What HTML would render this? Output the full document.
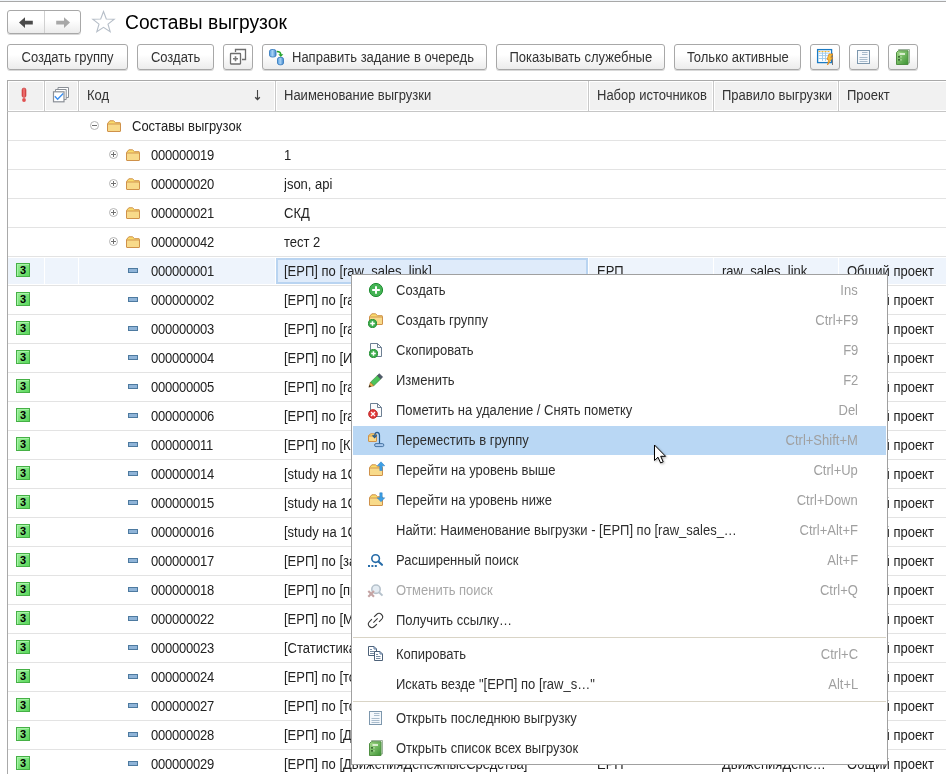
<!DOCTYPE html>
<html><head><meta charset="utf-8">
<style>
*{margin:0;padding:0;box-sizing:border-box}
html,body{width:946px;height:774px;overflow:hidden;background:#fff}
body{position:relative;font-family:"Liberation Sans",sans-serif;font-size:13px;color:#333}
.abs{position:absolute}
.s{display:inline-block;font-size:14px;transform:scaleX(.9286);transform-origin:0 50%}
.sr{transform-origin:100% 50%}
.sc{transform-origin:50% 50%}
svg{display:block}
.topline{left:0;top:0;width:946px;height:1px;background:#f1f5f9}
.topline2{left:0;top:1px;width:946px;height:1px;background:#a8a8a8}
.btn{position:absolute;top:44px;height:26px;border:1px solid #a8a8a8;border-radius:3px;
 background:linear-gradient(#ffffff 40%,#ececec);box-shadow:0 1px 0 rgba(0,0,0,.15);
 line-height:25px;text-align:center;color:#333;white-space:nowrap}
.nav{position:absolute;left:7px;top:10px;width:74px;height:24px;border:1px solid #a8a8a8;border-radius:3px;
 background:linear-gradient(#ffffff 40%,#ececec);box-shadow:0 1px 0 rgba(0,0,0,.15)}
.title{left:125px;top:10px;font-size:19px;color:#000;line-height:25px;white-space:nowrap}
.hdr{left:7px;top:80px;width:939px;height:32px;border-top:1px solid #a9a9a9;border-left:1px solid #a9a9a9;border-bottom:1px solid #c6c6c6;background:#c9c9c9}
.hc{position:absolute;top:0;height:30px;background:#f1f1f1;border:1px solid #fff;color:#333;line-height:27px;padding-left:7px;white-space:nowrap}
.tbl{left:7px;top:112px;width:939px;height:662px;border-left:1px solid #a9a9a9}
.row{position:absolute;left:0;width:939px;height:29px;border-bottom:1px solid #e3e3e3}
.cell{position:absolute;top:0;height:28px;line-height:29px;white-space:nowrap;overflow:hidden;color:#222}
.menu{left:351px;top:274px;width:537px;height:491px;border:1px solid #a0a0a0;background:#fff}
.mi{position:absolute;left:1px;width:533px;height:30px;line-height:29px;white-space:nowrap;color:#2e2e2e}
.mi .t{position:absolute;left:43px;top:0}
.mi .k{position:absolute;right:28px;top:0;color:#a0a0a0}
.sep{position:absolute;left:1px;width:533px;height:1px;background:#d9d4c6}
.badge{position:absolute;left:8px;top:6px;width:14px;height:14px;border:1px solid #46b046;background:linear-gradient(135deg,#9af09a,#5cd65c);box-shadow:inset 1px 1px 0 #a8f3a8;
 font:bold 11px/13px "Liberation Sans",sans-serif;color:#000;text-align:center}
.dash{position:absolute;left:120px;top:11px;width:10px;height:5px;border:1px solid #4d7aa0;background:#8fb4d8}
</style></head><body>
<div class="abs topline"></div><div class="abs topline2"></div>

<div class="nav"></div>
<div class="abs" style="left:44px;top:11px;width:1px;height:22px;background:#d0d0d0"></div>
<svg class="abs" style="left:18px;top:17px" width="16" height="12" viewBox="0 0 16 12"><path d="M1 5.5 L7 0.3 V3.8 H14.8 V7.4 H7 V11 Z" fill="#4a4a4a"/></svg>
<svg class="abs" style="left:55px;top:17px" width="16" height="12" viewBox="0 0 16 12"><path d="M15 5.5 L9 0.3 V3.8 H1.2 V7.4 H9 V11 Z" fill="#a8a8a8"/></svg>
<svg class="abs" style="left:91px;top:10px" width="25" height="24" viewBox="0 0 25 24"><path d="M12.5 1.5 L15.3 9 L23.2 9.2 L17 14.1 L19.2 21.8 L12.5 17.3 L5.8 21.8 L8 14.1 L1.8 9.2 L9.7 9 Z" fill="#fff" stroke="#b6bec8" stroke-width="1.1"/></svg>
<div class="abs title"><span style="display:inline-block;font-size:20px;transform:scaleX(.962);transform-origin:0 50%">Составы выгрузок</span></div>
<div class="btn" style="left:7px;width:121px"><span class="s sc">Создать группу</span></div>
<div class="btn" style="left:137px;width:77px"><span class="s sc">Создать</span></div>
<div class="btn" style="left:223px;width:30px"><span class="s sc"></span></div>
<div class="btn" style="left:262px;width:225px;text-align:left;padding-left:29px"><span class="s">Направить задание в очередь</span></div>
<div class="btn" style="left:496px;width:169px"><span class="s sc">Показывать служебные</span></div>
<div class="btn" style="left:674px;width:127px"><span class="s sc">Только активные</span></div>
<div class="btn" style="left:810px;width:30px"><span class="s sc"></span></div>
<div class="btn" style="left:849px;width:30px"><span class="s sc"></span></div>
<div class="btn" style="left:888px;width:30px"><span class="s sc"></span></div>
<svg class="abs" style="left:229px;top:48px" width="18" height="18" viewBox="0 0 18 18"><path d="M6.5 4 V1.5 H16.5 V11.5 H13" fill="none" stroke="#6e6e6e" stroke-width="1.3"/><rect x="1.5" y="5.5" width="10" height="10.5" rx="0.5" fill="#fff" stroke="#6e6e6e" stroke-width="1.3"/><path d="M4 10.8 H9 M6.5 8.3 V13.3" stroke="#7a7a7a" stroke-width="1.6"/></svg>
<svg class="abs" style="left:268px;top:48px" width="18" height="18" viewBox="0 0 18 18"><defs><linearGradient id="db" x1="0" y1="0" x2="1" y2="0"><stop offset="0" stop-color="#4f9be0"/><stop offset="0.45" stop-color="#a8d2f5"/><stop offset="1" stop-color="#3f86cc"/></linearGradient></defs><rect x="1.5" y="1.5" width="6.5" height="7.5" rx="2.5" ry="1.8" fill="url(#db)" stroke="#3b7ec0" stroke-width="0.9"/><rect x="9.5" y="9.3" width="6" height="7.5" rx="2.5" ry="1.8" fill="url(#db)" stroke="#3b7ec0" stroke-width="0.9"/><path d="M8.8 3.6 Q12.8 3.6 12.8 6.8" fill="none" stroke="#22a22a" stroke-width="1.5"/><path d="M10.3 6.3 H15.3 L12.8 9 Z" fill="#22a22a"/></svg>
<svg class="abs" style="left:816px;top:48px" width="18" height="18" viewBox="0 0 18 18"><rect x="1.6" y="1.6" width="14" height="13" fill="#fff" stroke="#1b7bc4" stroke-width="1.3"/><path d="M2.5 3.5 H14.5" stroke="#f2b431" stroke-width="1.1" stroke-dasharray="2 1"/><path d="M2.5 5.2 H14.5 M2.5 7.6 H14.5 M2.5 10.5 H14.5 M6.5 4 V13 M9.5 4 V13" stroke="#9cc8ea" stroke-width="0.9"/><path d="M16.5 5.5 V17" stroke="#777" stroke-width="1"/><path d="M13 6 H16.5 L14.6 9.6 H16.6 L11.5 17 L12.8 11.6 H11 Z" fill="#f7c13a" stroke="#e0861c" stroke-width="0.8"/></svg>
<svg class="abs" style="left:857px;top:50px" width="13" height="14" viewBox="0 0 13 14"><rect x="0.5" y="0.5" width="12" height="13" fill="#f4f8fc" stroke="#7d97ad" stroke-width="1"/><path d="M5 2.5 H10.5 M5 4.5 H10.5 M2.5 7.5 H10.5 M2.5 9.5 H10.5 M2.5 11.5 H10.5" stroke="#a9bccd" stroke-width="1"/></svg>
<svg class="abs" style="left:896px;top:49px" width="14" height="16" viewBox="0 0 14 16"><path d="M2.5 0.5 H13.5 V14 H12 Z" fill="#e2eadc" stroke="#9fb39f" stroke-width="1"/><defs><linearGradient id="gb" x1="0" y1="0" x2="1" y2="1"><stop offset="0" stop-color="#a8dc8e"/><stop offset="1" stop-color="#3a9232"/></linearGradient></defs><path d="M0.5 3.5 L2.3 1.8 H12 V15.5 H0.5 Z" fill="url(#gb)" stroke="#4f8f42" stroke-width="1"/><rect x="3.5" y="4.2" width="5.5" height="1.6" fill="#eef9e6"/><rect x="2" y="7.2" width="2.2" height="1.3" fill="#2d5a28"/><rect x="2" y="10.2" width="2.2" height="1.3" fill="#2d5a28"/><rect x="4.2" y="7.2" width="1.5" height="1.3" fill="#b8e0a8"/><rect x="4.2" y="10.2" width="1.5" height="1.3" fill="#b8e0a8"/></svg>
<div class="abs hdr">
<div class="hc" style="left:0px;width:36px"><span class="s"></span></div>
<div class="hc" style="left:37px;width:33px"><span class="s"></span></div>
<div class="hc" style="left:71px;width:196px"><span class="s">Код</span></div>
<div class="hc" style="left:268px;width:312px"><span class="s">Наименование выгрузки</span></div>
<div class="hc" style="left:581px;width:124px"><span class="s">Набор источников</span></div>
<div class="hc" style="left:706px;width:124px"><span class="s">Правило выгрузки</span></div>
<div class="hc" style="left:831px;width:108px"><span class="s">Проект</span></div>
</div>
<svg class="abs" style="left:20px;top:87px" width="8" height="16" viewBox="0 0 8 16"><defs><linearGradient id="ex" x1="0" y1="0" x2="1" y2="0"><stop offset="0" stop-color="#d63c3c"/><stop offset="0.5" stop-color="#f07a7a"/><stop offset="1" stop-color="#d03838"/></linearGradient></defs><rect x="2" y="1" width="4" height="9.5" rx="2" fill="url(#ex)" stroke="#c83a3a" stroke-width="0.6"/><circle cx="4" cy="13" r="1.9" fill="#e05050"/></svg>
<svg class="abs" style="left:52px;top:86px" width="18" height="17" viewBox="0 0 18 17"><path d="M6 3.5 V1.5 H16.5 V11.5 H14" fill="#fff" stroke="#8a8f96" stroke-width="1"/><path d="M3.5 5.8 V3.5 H14.2 V13.5 H11.5" fill="#fff" stroke="#8a8f96" stroke-width="1"/><rect x="1.5" y="5.8" width="10.5" height="10" fill="#fff" stroke="#8a8f96" stroke-width="1.2"/><path d="M2.8 10.3 L5.6 13.2 L11.2 7.6" fill="none" stroke="#3b8ff0" stroke-width="1.4"/></svg>
<svg class="abs" style="left:254px;top:89px" width="8" height="13" viewBox="0 0 8 13"><path d="M3.5 1 V10.5" stroke="#444" stroke-width="1.1"/><path d="M1.2 8.3 L3.5 10.6 L5.8 8.3" fill="none" stroke="#444" stroke-width="1.4"/></svg>
<div class="abs tbl">
<div class="row" style="top:0px"><div class="cell" style="left:124px"><span class="s">Составы выгрузок</span></div></div>
<div class="row" style="top:29px"><div class="cell" style="left:143px"><span class="s" style="letter-spacing:-0.25px">000000019</span></div><div class="cell" style="left:276px"><span class="s">1</span></div></div>
<div class="row" style="top:58px"><div class="cell" style="left:143px"><span class="s" style="letter-spacing:-0.25px">000000020</span></div><div class="cell" style="left:276px"><span class="s">json, api</span></div></div>
<div class="row" style="top:87px"><div class="cell" style="left:143px"><span class="s" style="letter-spacing:-0.25px">000000021</span></div><div class="cell" style="left:276px"><span class="s">СКД</span></div></div>
<div class="row" style="top:116px"><div class="cell" style="left:143px"><span class="s" style="letter-spacing:-0.25px">000000042</span></div><div class="cell" style="left:276px"><span class="s">тест 2</span></div></div>
<div class="row" style="top:145px;background:#eef4fc">
<div class="abs" style="left:36px;top:0;width:1px;height:28px;background:#fff"></div>
<div class="abs" style="left:70px;top:0;width:1px;height:28px;background:#fff"></div>
<div class="abs" style="left:267px;top:0;width:1px;height:28px;background:#fff"></div>
<div class="abs" style="left:580px;top:0;width:1px;height:28px;background:#fff"></div>
<div class="abs" style="left:705px;top:0;width:1px;height:28px;background:#fff"></div>
<div class="abs" style="left:830px;top:0;width:1px;height:28px;background:#fff"></div>
<div class="abs" style="left:0;top:0;width:939px;height:1px;background:#fff"></div>
<div class="abs" style="left:0;top:27px;width:939px;height:1px;background:#fff"></div>
<div class="abs" style="left:268px;top:1px;width:312px;height:26px;background:#dfebfa;border:2px solid #b9d4f1"></div>
<div class="badge">3</div><div class="dash"></div>
<div class="cell" style="left:143px"><span class="s" style="letter-spacing:-0.25px">000000001</span></div><div class="cell" style="left:276px;width:300px"><span class="s">[ЕРП] по [raw_sales_link]</span></div><div class="cell" style="left:589px;width:115px"><span class="s">ЕРП</span></div><div class="cell" style="left:714px;width:115px"><span class="s">raw_sales_link</span></div><div class="cell" style="left:839px"><span class="s">Общий проект</span></div>
</div>
<div class="row" style="top:174px;">
<div class="badge">3</div><div class="dash"></div>
<div class="cell" style="left:143px"><span class="s" style="letter-spacing:-0.25px">000000002</span></div><div class="cell" style="left:276px;width:300px"><span class="s">[ЕРП] по [raw_sales_link2]</span></div><div class="cell" style="left:589px;width:115px"><span class="s">ЕРП</span></div><div class="cell" style="left:714px;width:115px"><span class="s">raw_sales_link</span></div><div class="cell" style="left:839px"><span class="s">Общий проект</span></div>
</div>
<div class="row" style="top:203px;">
<div class="badge">3</div><div class="dash"></div>
<div class="cell" style="left:143px"><span class="s" style="letter-spacing:-0.25px">000000003</span></div><div class="cell" style="left:276px;width:300px"><span class="s">[ЕРП] по [raw_sales]</span></div><div class="cell" style="left:589px;width:115px"><span class="s">ЕРП</span></div><div class="cell" style="left:714px;width:115px"><span class="s">raw_sales</span></div><div class="cell" style="left:839px"><span class="s">Общий проект</span></div>
</div>
<div class="row" style="top:232px;">
<div class="badge">3</div><div class="dash"></div>
<div class="cell" style="left:143px"><span class="s" style="letter-spacing:-0.25px">000000004</span></div><div class="cell" style="left:276px;width:300px"><span class="s">[ЕРП] по [Итоги]</span></div><div class="cell" style="left:589px;width:115px"><span class="s">ЕРП</span></div><div class="cell" style="left:714px;width:115px"><span class="s">Итоги</span></div><div class="cell" style="left:839px"><span class="s">Общий проект</span></div>
</div>
<div class="row" style="top:261px;">
<div class="badge">3</div><div class="dash"></div>
<div class="cell" style="left:143px"><span class="s" style="letter-spacing:-0.25px">000000005</span></div><div class="cell" style="left:276px;width:300px"><span class="s">[ЕРП] по [raw_stock]</span></div><div class="cell" style="left:589px;width:115px"><span class="s">ЕРП</span></div><div class="cell" style="left:714px;width:115px"><span class="s">raw_stock</span></div><div class="cell" style="left:839px"><span class="s">Общий проект</span></div>
</div>
<div class="row" style="top:290px;">
<div class="badge">3</div><div class="dash"></div>
<div class="cell" style="left:143px"><span class="s" style="letter-spacing:-0.25px">000000006</span></div><div class="cell" style="left:276px;width:300px"><span class="s">[ЕРП] по [raw_orders]</span></div><div class="cell" style="left:589px;width:115px"><span class="s">ЕРП</span></div><div class="cell" style="left:714px;width:115px"><span class="s">raw_orders</span></div><div class="cell" style="left:839px"><span class="s">Общий проект</span></div>
</div>
<div class="row" style="top:319px;">
<div class="badge">3</div><div class="dash"></div>
<div class="cell" style="left:143px"><span class="s" style="letter-spacing:-0.25px">000000011</span></div><div class="cell" style="left:276px;width:300px"><span class="s">[ЕРП] по [Контрагенты]</span></div><div class="cell" style="left:589px;width:115px"><span class="s">ЕРП</span></div><div class="cell" style="left:714px;width:115px"><span class="s">Контрагенты</span></div><div class="cell" style="left:839px"><span class="s">Общий проект</span></div>
</div>
<div class="row" style="top:348px;">
<div class="badge">3</div><div class="dash"></div>
<div class="cell" style="left:143px"><span class="s" style="letter-spacing:-0.25px">000000014</span></div><div class="cell" style="left:276px;width:300px"><span class="s">[study на 1С]</span></div><div class="cell" style="left:589px;width:115px"><span class="s">ЕРП</span></div><div class="cell" style="left:714px;width:115px"><span class="s">study</span></div><div class="cell" style="left:839px"><span class="s">Общий проект</span></div>
</div>
<div class="row" style="top:377px;">
<div class="badge">3</div><div class="dash"></div>
<div class="cell" style="left:143px"><span class="s" style="letter-spacing:-0.25px">000000015</span></div><div class="cell" style="left:276px;width:300px"><span class="s">[study на 1С]</span></div><div class="cell" style="left:589px;width:115px"><span class="s">ЕРП</span></div><div class="cell" style="left:714px;width:115px"><span class="s">study</span></div><div class="cell" style="left:839px"><span class="s">Общий проект</span></div>
</div>
<div class="row" style="top:406px;">
<div class="badge">3</div><div class="dash"></div>
<div class="cell" style="left:143px"><span class="s" style="letter-spacing:-0.25px">000000016</span></div><div class="cell" style="left:276px;width:300px"><span class="s">[study на 1С]</span></div><div class="cell" style="left:589px;width:115px"><span class="s">ЕРП</span></div><div class="cell" style="left:714px;width:115px"><span class="s">study</span></div><div class="cell" style="left:839px"><span class="s">Общий проект</span></div>
</div>
<div class="row" style="top:435px;">
<div class="badge">3</div><div class="dash"></div>
<div class="cell" style="left:143px"><span class="s" style="letter-spacing:-0.25px">000000017</span></div><div class="cell" style="left:276px;width:300px"><span class="s">[ЕРП] по [заказы]</span></div><div class="cell" style="left:589px;width:115px"><span class="s">ЕРП</span></div><div class="cell" style="left:714px;width:115px"><span class="s">заказы</span></div><div class="cell" style="left:839px"><span class="s">Общий проект</span></div>
</div>
<div class="row" style="top:464px;">
<div class="badge">3</div><div class="dash"></div>
<div class="cell" style="left:143px"><span class="s" style="letter-spacing:-0.25px">000000018</span></div><div class="cell" style="left:276px;width:300px"><span class="s">[ЕРП] по [продажи]</span></div><div class="cell" style="left:589px;width:115px"><span class="s">ЕРП</span></div><div class="cell" style="left:714px;width:115px"><span class="s">продажи</span></div><div class="cell" style="left:839px"><span class="s">Общий проект</span></div>
</div>
<div class="row" style="top:493px;">
<div class="badge">3</div><div class="dash"></div>
<div class="cell" style="left:143px"><span class="s" style="letter-spacing:-0.25px">000000022</span></div><div class="cell" style="left:276px;width:300px"><span class="s">[ЕРП] по [Маркетинг]</span></div><div class="cell" style="left:589px;width:115px"><span class="s">ЕРП</span></div><div class="cell" style="left:714px;width:115px"><span class="s">Маркетинг</span></div><div class="cell" style="left:839px"><span class="s">Общий проект</span></div>
</div>
<div class="row" style="top:522px;">
<div class="badge">3</div><div class="dash"></div>
<div class="cell" style="left:143px"><span class="s" style="letter-spacing:-0.25px">000000023</span></div><div class="cell" style="left:276px;width:300px"><span class="s">[Статистика]</span></div><div class="cell" style="left:589px;width:115px"><span class="s">ЕРП</span></div><div class="cell" style="left:714px;width:115px"><span class="s">Статистика</span></div><div class="cell" style="left:839px"><span class="s">Общий проект</span></div>
</div>
<div class="row" style="top:551px;">
<div class="badge">3</div><div class="dash"></div>
<div class="cell" style="left:143px"><span class="s" style="letter-spacing:-0.25px">000000024</span></div><div class="cell" style="left:276px;width:300px"><span class="s">[ЕРП] по [товары]</span></div><div class="cell" style="left:589px;width:115px"><span class="s">ЕРП</span></div><div class="cell" style="left:714px;width:115px"><span class="s">товары</span></div><div class="cell" style="left:839px"><span class="s">Общий проект</span></div>
</div>
<div class="row" style="top:580px;">
<div class="badge">3</div><div class="dash"></div>
<div class="cell" style="left:143px"><span class="s" style="letter-spacing:-0.25px">000000027</span></div><div class="cell" style="left:276px;width:300px"><span class="s">[ЕРП] по [товары2]</span></div><div class="cell" style="left:589px;width:115px"><span class="s">ЕРП</span></div><div class="cell" style="left:714px;width:115px"><span class="s">товары</span></div><div class="cell" style="left:839px"><span class="s">Общий проект</span></div>
</div>
<div class="row" style="top:609px;">
<div class="badge">3</div><div class="dash"></div>
<div class="cell" style="left:143px"><span class="s" style="letter-spacing:-0.25px">000000028</span></div><div class="cell" style="left:276px;width:300px"><span class="s">[ЕРП] по [Движения]</span></div><div class="cell" style="left:589px;width:115px"><span class="s">ЕРП</span></div><div class="cell" style="left:714px;width:115px"><span class="s">Движения</span></div><div class="cell" style="left:839px"><span class="s">Общий проект</span></div>
</div>
<div class="row" style="top:638px;">
<div class="badge">3</div><div class="dash"></div>
<div class="cell" style="left:143px"><span class="s" style="letter-spacing:-0.25px">000000029</span></div><div class="cell" style="left:276px;width:300px"><span class="s">[ЕРП] по [ДвиженияДенежныеСредства]</span></div><div class="cell" style="left:589px;width:115px"><span class="s">ЕРП</span></div><div class="cell" style="left:714px;width:115px"><span class="s">ДвиженияДене…</span></div><div class="cell" style="left:839px"><span class="s">Общий проект</span></div>
</div>
</div>
<svg class="abs" style="left:90px;top:121px" width="9" height="9" viewBox="0 0 9 9"><circle cx="4.5" cy="4.5" r="4" fill="#fff" stroke="#b4b4b4" stroke-width="1"/><path d="M2 4.5 H7" stroke="#707070" stroke-width="1"/></svg>
<svg class="abs" style="left:107px;top:120px" width="14" height="12" viewBox="0 0 14 12"><path d="M0.5 11 V3.5 L2.8 0.8 H6.5 L8.6 2.7 H13 Q13.5 2.7 13.5 3.5 V11 Q13.5 11.5 13 11.5 H1 Q0.5 11.5 0.5 11 Z" fill="#f9dc6c" stroke="#cf914a" stroke-width="1"/><rect x="1" y="4.0" width="12" height="7.0" fill="#f8da8a"/><path d="M0.8 4.0 H13.2" stroke="#d29650" stroke-width="1"/></svg>
<svg class="abs" style="left:109px;top:150px" width="9" height="9" viewBox="0 0 9 9"><circle cx="4.5" cy="4.5" r="4" fill="#fff" stroke="#b4b4b4" stroke-width="1"/><path d="M2 4.5 H7" stroke="#707070" stroke-width="1"/><path d="M4.5 2 V7" stroke="#707070" stroke-width="1"/></svg>
<svg class="abs" style="left:126px;top:149px" width="14" height="12" viewBox="0 0 14 12"><path d="M0.5 11 V3.5 L2.8 0.8 H6.5 L8.6 2.7 H13 Q13.5 2.7 13.5 3.5 V11 Q13.5 11.5 13 11.5 H1 Q0.5 11.5 0.5 11 Z" fill="#f9dc6c" stroke="#cf914a" stroke-width="1"/><rect x="1" y="4.0" width="12" height="7.0" fill="#f8da8a"/><path d="M0.8 4.0 H13.2" stroke="#d29650" stroke-width="1"/></svg>
<svg class="abs" style="left:109px;top:179px" width="9" height="9" viewBox="0 0 9 9"><circle cx="4.5" cy="4.5" r="4" fill="#fff" stroke="#b4b4b4" stroke-width="1"/><path d="M2 4.5 H7" stroke="#707070" stroke-width="1"/><path d="M4.5 2 V7" stroke="#707070" stroke-width="1"/></svg>
<svg class="abs" style="left:126px;top:178px" width="14" height="12" viewBox="0 0 14 12"><path d="M0.5 11 V3.5 L2.8 0.8 H6.5 L8.6 2.7 H13 Q13.5 2.7 13.5 3.5 V11 Q13.5 11.5 13 11.5 H1 Q0.5 11.5 0.5 11 Z" fill="#f9dc6c" stroke="#cf914a" stroke-width="1"/><rect x="1" y="4.0" width="12" height="7.0" fill="#f8da8a"/><path d="M0.8 4.0 H13.2" stroke="#d29650" stroke-width="1"/></svg>
<svg class="abs" style="left:109px;top:208px" width="9" height="9" viewBox="0 0 9 9"><circle cx="4.5" cy="4.5" r="4" fill="#fff" stroke="#b4b4b4" stroke-width="1"/><path d="M2 4.5 H7" stroke="#707070" stroke-width="1"/><path d="M4.5 2 V7" stroke="#707070" stroke-width="1"/></svg>
<svg class="abs" style="left:126px;top:207px" width="14" height="12" viewBox="0 0 14 12"><path d="M0.5 11 V3.5 L2.8 0.8 H6.5 L8.6 2.7 H13 Q13.5 2.7 13.5 3.5 V11 Q13.5 11.5 13 11.5 H1 Q0.5 11.5 0.5 11 Z" fill="#f9dc6c" stroke="#cf914a" stroke-width="1"/><rect x="1" y="4.0" width="12" height="7.0" fill="#f8da8a"/><path d="M0.8 4.0 H13.2" stroke="#d29650" stroke-width="1"/></svg>
<svg class="abs" style="left:109px;top:237px" width="9" height="9" viewBox="0 0 9 9"><circle cx="4.5" cy="4.5" r="4" fill="#fff" stroke="#b4b4b4" stroke-width="1"/><path d="M2 4.5 H7" stroke="#707070" stroke-width="1"/><path d="M4.5 2 V7" stroke="#707070" stroke-width="1"/></svg>
<svg class="abs" style="left:126px;top:236px" width="14" height="12" viewBox="0 0 14 12"><path d="M0.5 11 V3.5 L2.8 0.8 H6.5 L8.6 2.7 H13 Q13.5 2.7 13.5 3.5 V11 Q13.5 11.5 13 11.5 H1 Q0.5 11.5 0.5 11 Z" fill="#f9dc6c" stroke="#cf914a" stroke-width="1"/><rect x="1" y="4.0" width="12" height="7.0" fill="#f8da8a"/><path d="M0.8 4.0 H13.2" stroke="#d29650" stroke-width="1"/></svg>
<div class="abs menu">
<div class="mi" style="top:1px;"><span class="t s">Создать</span><span class="k s sr">Ins</span></div>
<div class="mi" style="top:31px;"><span class="t s">Создать группу</span><span class="k s sr">Ctrl+F9</span></div>
<div class="mi" style="top:61px;"><span class="t s">Скопировать</span><span class="k s sr">F9</span></div>
<div class="mi" style="top:91px;"><span class="t s">Изменить</span><span class="k s sr">F2</span></div>
<div class="mi" style="top:121px;"><span class="t s">Пометить на удаление / Снять пометку</span><span class="k s sr">Del</span></div>
<div class="mi" style="top:151px;background:#b9d7f4;height:29px;"><span class="t s">Переместить в группу</span><span class="k s sr">Ctrl+Shift+M</span></div>
<div class="mi" style="top:181px;"><span class="t s">Перейти на уровень выше</span><span class="k s sr">Ctrl+Up</span></div>
<div class="mi" style="top:211px;"><span class="t s">Перейти на уровень ниже</span><span class="k s sr">Ctrl+Down</span></div>
<div class="mi" style="top:241px;"><span class="t s">Найти: Наименование выгрузки - [ЕРП] по [raw_sales_…</span><span class="k s sr">Ctrl+Alt+F</span></div>
<div class="mi" style="top:271px;"><span class="t s">Расширенный поиск</span><span class="k s sr">Alt+F</span></div>
<div class="mi" style="top:301px;color:#a8a8a8;"><span class="t s">Отменить поиск</span><span class="k s sr">Ctrl+Q</span></div>
<div class="mi" style="top:331px;"><span class="t s">Получить ссылку…</span><span class="k s sr"></span></div>
<div class="sep" style="top:362px"></div>
<div class="mi" style="top:365px;"><span class="t s">Копировать</span><span class="k s sr">Ctrl+C</span></div>
<div class="mi" style="top:395px;"><span class="t s">Искать везде "[ЕРП] по [raw_s…"</span><span class="k s sr">Alt+L</span></div>
<div class="sep" style="top:426px"></div>
<div class="mi" style="top:429px;"><span class="t s">Открыть последнюю выгрузку</span><span class="k s sr"></span></div>
<div class="mi" style="top:459px;"><span class="t s">Открыть список всех выгрузок</span><span class="k s sr"></span></div>
</div>
<svg class="abs" style="left:368px;top:282px" width="16" height="16" viewBox="0 0 16 16"><circle cx="8" cy="8" r="6.6" fill="#45b455" stroke="#1f8d32" stroke-width="1"/><path d="M4.172000000000001 8 H11.828 M8 4.172000000000001 V11.828" stroke="#fff" stroke-width="1.9799999999999998"/></svg>
<svg class="abs" style="left:369px;top:313px" width="14" height="12" viewBox="0 0 14 12"><path d="M0.5 11 V3.5 L2.8 0.8 H6.5 L8.6 2.7 H13 Q13.5 2.7 13.5 3.5 V11 Q13.5 11.5 13 11.5 H1 Q0.5 11.5 0.5 11 Z" fill="#f9dc6c" stroke="#cf914a" stroke-width="1"/><rect x="1" y="4.0" width="12" height="7.0" fill="#f8da8a"/><path d="M0.8 4.0 H13.2" stroke="#d29650" stroke-width="1"/></svg>
<svg class="abs" style="left:368px;top:319px" width="9" height="9" viewBox="0 0 9 9"><circle cx="4.5" cy="4.5" r="4.1" fill="#3fae4f" stroke="#1d8a2e" stroke-width="0.9"/><path d="M2.2 4.5 H6.8 M4.5 2.2 V6.8" stroke="#fff" stroke-width="1.5"/></svg>
<svg class="abs" style="left:370px;top:343px" width="12" height="14" viewBox="0 0 12 14"><path d="M0.5 0.5 H7.5 L11.5 4.5 V13.5 H0.5 Z" fill="#fafbfc" stroke="#6d7f92" stroke-width="1"/><path d="M7.5 0.5 V4.5 H11.5" fill="none" stroke="#6d7f92" stroke-width="1"/></svg>
<svg class="abs" style="left:369px;top:349px" width="9" height="9" viewBox="0 0 9 9"><circle cx="4.5" cy="4.5" r="4.1" fill="#3fae4f" stroke="#1d8a2e" stroke-width="0.9"/><path d="M2.2 4.5 H6.8 M4.5 2.2 V6.8" stroke="#fff" stroke-width="1.5"/></svg>
<svg class="abs" style="left:368px;top:372px" width="16" height="16" viewBox="0 0 16 16"><g transform="translate(7.2 9.0) rotate(-44)"><rect x="-4.3" y="-2.4" width="9.8" height="4.8" fill="#4cc35a" stroke="#3a8a3a" stroke-width="0.6"/><rect x="5.3" y="-2.4" width="2.8" height="4.8" fill="#4e5a68" stroke="#3a4450" stroke-width="0.5"/><path d="M-4.3 -2.4 L-8.6 0 L-4.3 2.4 Z" fill="#f2b64a" stroke="#9a6a2a" stroke-width="0.6"/><path d="M-6.6 -1.1 L-9.2 0 L-6.6 1.1 Z" fill="#3a2a1a"/></g></svg>
<svg class="abs" style="left:370px;top:403px" width="12" height="14" viewBox="0 0 12 14"><path d="M0.5 0.5 H7.5 L11.5 4.5 V13.5 H0.5 Z" fill="#fafbfc" stroke="#6d7f92" stroke-width="1"/><path d="M7.5 0.5 V4.5 H11.5" fill="none" stroke="#6d7f92" stroke-width="1"/></svg>
<svg class="abs" style="left:368px;top:409px" width="10" height="10" viewBox="0 0 10 10"><circle cx="5" cy="5" r="4.4" fill="#e03a3a" stroke="#b82020" stroke-width="0.8"/><path d="M3 3 L7 7 M7 3 L3 7" stroke="#fff" stroke-width="1.3"/></svg>
<svg class="abs" style="left:368px;top:433px" width="9" height="9" viewBox="0 0 9 9"><path d="M0.5 8 V2.5 L2.8 0.8 H6.5 L8.6 1.7 H8 Q8.5 1.7 8.5 2.5 V8 Q8.5 8.5 8 8.5 H1 Q0.5 8.5 0.5 8 Z" fill="#f9dc6c" stroke="#cf914a" stroke-width="1"/><rect x="1" y="3.0" width="7" height="5.0" fill="#f8da8a"/><path d="M0.8 3.0 H8.2" stroke="#d29650" stroke-width="1"/></svg>
<svg class="abs" style="left:366px;top:430px" width="20" height="18" viewBox="0 0 20 18"><path d="M13.5 15.5 V5.5 Q13.5 2.4 11 2.4 Q9 2.4 8.6 6" fill="none" stroke="#245a8c" stroke-width="1.2"/><path d="M6.6 5.2 L8.6 7.4 L10.6 5.2" fill="none" stroke="#245a8c" stroke-width="1.5"/><rect x="8.6" y="13.6" width="9.2" height="3" rx="1.4" fill="#a8c8ee" stroke="#3a6a9a" stroke-width="0.9"/></svg>
<svg class="abs" style="left:369px;top:464px" width="14" height="12" viewBox="0 0 14 12"><path d="M0.5 11 V3.5 L2.8 0.8 H6.5 L8.6 2.7 H13 Q13.5 2.7 13.5 3.5 V11 Q13.5 11.5 13 11.5 H1 Q0.5 11.5 0.5 11 Z" fill="#f9dc6c" stroke="#cf914a" stroke-width="1"/><rect x="1" y="4.0" width="12" height="7.0" fill="#f8da8a"/><path d="M0.8 4.0 H13.2" stroke="#d29650" stroke-width="1"/></svg>
<svg class="abs" style="left:376px;top:461px" width="10" height="10" viewBox="0 0 10 10"><path d="M5 0.8 L8.8 4.8 H6.2 V9.5 H3.8 V4.8 H1.2 Z" fill="#3da0e6" stroke="#2a7cc0" stroke-width="0.5"/></svg>
<svg class="abs" style="left:369px;top:494px" width="14" height="12" viewBox="0 0 14 12"><path d="M0.5 11 V3.5 L2.8 0.8 H6.5 L8.6 2.7 H13 Q13.5 2.7 13.5 3.5 V11 Q13.5 11.5 13 11.5 H1 Q0.5 11.5 0.5 11 Z" fill="#f9dc6c" stroke="#cf914a" stroke-width="1"/><rect x="1" y="4.0" width="12" height="7.0" fill="#f8da8a"/><path d="M0.8 4.0 H13.2" stroke="#d29650" stroke-width="1"/></svg>
<svg class="abs" style="left:376px;top:492px" width="10" height="11" viewBox="0 0 10 11"><path d="M5 9.8 L8.8 5.8 H6.2 V0.8 H3.8 V5.8 H1.2 Z" fill="#3da0e6" stroke="#2a7cc0" stroke-width="0.5"/></svg>
<svg class="abs" style="left:367px;top:553px" width="18" height="16" viewBox="0 0 18 16"><circle cx="8.6" cy="5.6" r="3.8" fill="none" stroke="#276ca8" stroke-width="1.6"/><path d="M11.4 8.4 L15 11.8" stroke="#276ca8" stroke-width="2.1" stroke-linecap="round"/><path d="M1 13 H3 M4.4 13 H6.4 M7.8 13 H9.8" stroke="#276ca8" stroke-width="2"/></svg>
<svg class="abs" style="left:367px;top:583px" width="18" height="16" viewBox="0 0 18 16"><circle cx="9" cy="6.2" r="4.2" fill="#e4ecf3" stroke="#b6c2cc" stroke-width="1.6"/><path d="M12 9.2 L15.5 12.6" stroke="#b6c2cc" stroke-width="2"/><path d="M1.3 8 L7 13.7 M7 8 L1.3 13.7" stroke="#c4a4a4" stroke-width="2.1"/></svg>
<svg class="abs" style="left:366px;top:611px" width="19" height="19" viewBox="0 0 19 19"><g transform="rotate(-45 9.5 9.5)" fill="none" stroke="#3a3a3a" stroke-width="1.1"><path d="M8 6 H4.5 Q1 6 1 9.5 Q1 13 4.5 13 H8"/><path d="M11 6 H14.5 Q18 6 18 9.5 Q18 13 14.5 13 H11"/><path d="M6.5 9.5 H12.5"/></g></svg>
<svg class="abs" style="left:368px;top:646px" width="16" height="16" viewBox="0 0 16 16"><path d="M0.5 0.5 H6 L8.5 3 V9.5 H0.5 Z" fill="#fff" stroke="#4d6178" stroke-width="1"/><path d="M6 0.5 V3 H8.5" fill="none" stroke="#5a7aa0" stroke-width="1"/><path d="M2 3.5 H4 M2 5.5 H6.5 M2 7.5 H6.5" stroke="#7a8ea4" stroke-width="1"/><path d="M6.5 5.5 H12 L14.5 8 V14.5 H6.5 Z" fill="#fff" stroke="#4d6178" stroke-width="1"/><path d="M12 5.5 V8 H14.5" fill="none" stroke="#5a7aa0" stroke-width="1"/><path d="M8 8.5 H10 M8 10.5 H12.5 M8 12.5 H12.5" stroke="#7a8ea4" stroke-width="1"/></svg>
<svg class="abs" style="left:369px;top:711px" width="13" height="14" viewBox="0 0 13 14"><rect x="0.5" y="0.5" width="12" height="13" fill="#f4f8fc" stroke="#7d97ad" stroke-width="1"/><path d="M5 2.5 H10.5 M5 4.5 H10.5 M2.5 7.5 H10.5 M2.5 9.5 H10.5 M2.5 11.5 H10.5" stroke="#a9bccd" stroke-width="1"/></svg>
<svg class="abs" style="left:369px;top:740px" width="14" height="16" viewBox="0 0 14 16"><path d="M2.5 0.5 H13.5 V14 H12 Z" fill="#e2eadc" stroke="#9fb39f" stroke-width="1"/><defs><linearGradient id="gb" x1="0" y1="0" x2="1" y2="1"><stop offset="0" stop-color="#a8dc8e"/><stop offset="1" stop-color="#3a9232"/></linearGradient></defs><path d="M0.5 3.5 L2.3 1.8 H12 V15.5 H0.5 Z" fill="url(#gb)" stroke="#4f8f42" stroke-width="1"/><rect x="3.5" y="4.2" width="5.5" height="1.6" fill="#eef9e6"/><rect x="2" y="7.2" width="2.2" height="1.3" fill="#2d5a28"/><rect x="2" y="10.2" width="2.2" height="1.3" fill="#2d5a28"/><rect x="4.2" y="7.2" width="1.5" height="1.3" fill="#b8e0a8"/><rect x="4.2" y="10.2" width="1.5" height="1.3" fill="#b8e0a8"/></svg>
<svg class="abs" style="left:653px;top:444px;filter:drop-shadow(1px 1px 1px rgba(0,0,0,.3))" width="14" height="21" viewBox="0 0 14 21"><path d="M1.5 1 V16.5 L5 13.2 L7.6 19 L10.2 17.8 L7.7 12.3 H12.6 Z" fill="#fff" stroke="#000" stroke-width="1" stroke-linejoin="miter"/></svg>
</body></html>
